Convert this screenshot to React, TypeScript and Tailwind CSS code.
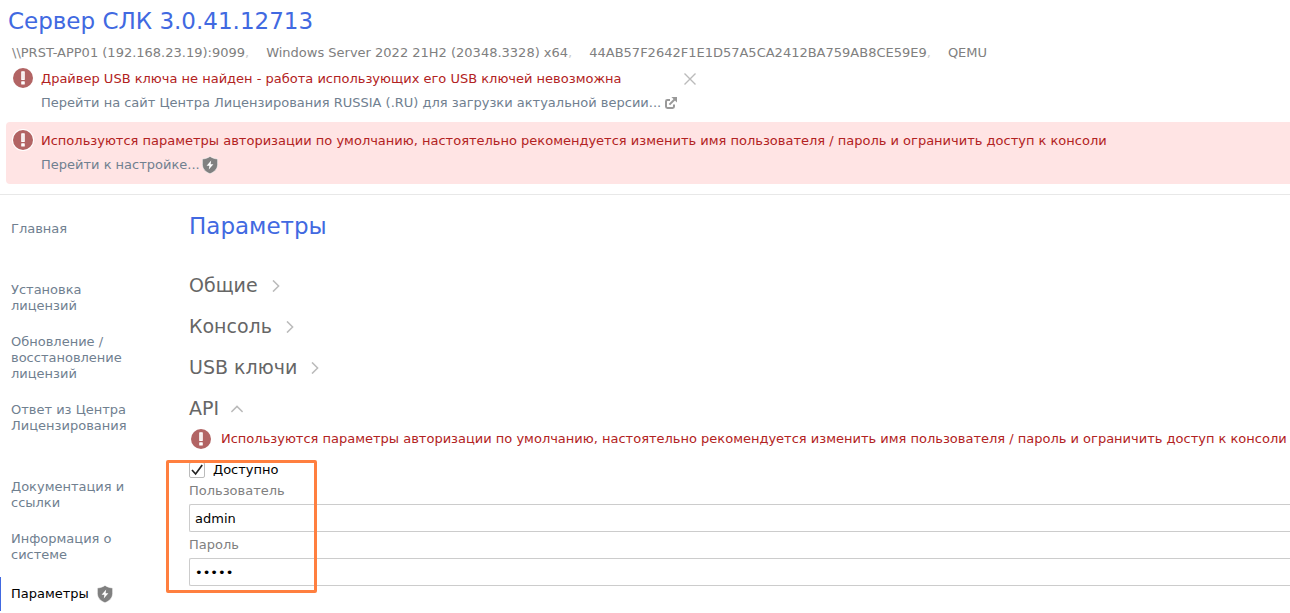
import { useState } from "react";
import clsx from "clsx";

const AUTH_WARNING =
  "Используются параметры авторизации по умолчанию, настоятельно рекомендуется изменить имя пользователя / пароль и ограничить доступ к консоли";

const serverInfo = [
  "\\\\PRST-APP01 (192.168.23.19):9099",
  "Windows Server 2022 21H2 (20348.3328) x64",
  "44AB57F2642F1E1D57A5CA2412BA759AB8CE59E9",
  "QEMU",
];

const menuGroups = [
  ["Главная"],
  ["Установка лицензий", "Обновление / восстановление лицензий", "Ответ из Центра Лицензирования"],
  ["Документация и ссылки", "Информация о системе", "Параметры"],
];

function AlertIcon() {
  return (
    <svg viewBox="0 0 22 22" className="h-[22px] w-[22px] shrink-0" aria-hidden="true">
      <circle cx="11" cy="11" r="11" fill="#fff" />
      <circle cx="11" cy="11" r="10" fill="#b26464" />
      <rect x="9.2" y="4.2" width="3.6" height="8.8" rx="0.6" fill="#fff" />
      <rect x="9.2" y="14.2" width="3.6" height="3.4" rx="0.6" fill="#fff" />
      <path d="M11 5.5V12" stroke="#e8d0d0" strokeWidth="0.8" />
    </svg>
  );
}

function ShieldIcon() {
  return (
    <svg viewBox="0 0 16 18" className="h-[18px] w-4 shrink-0" aria-hidden="true">
      <path
        d="M8 .4C10 1.8 12.6 2.8 15.6 3V8.4C15.6 12.8 12.4 16 8 17.7 3.6 16 .4 12.8 .4 8.4V3C3.4 2.8 6 1.8 8 .4Z"
        fill="#808080"
        stroke="#fff"
        strokeWidth="0.5"
      />
      <path d="M9.2 4.4 4.6 9.8H7.4L6.8 13.6 11.4 8.2H8.6Z" fill="#fff" />
    </svg>
  );
}

function ExternalIcon() {
  return (
    <svg viewBox="0 0 12 12" className="h-3 w-3 shrink-0" fill="none" stroke="#999" aria-hidden="true">
      <path d="M5 3H2.4Q1 3 1 4.4V9.6Q1 11 2.4 11H7.6Q9 11 9 9.6V7.4" strokeWidth="2" />
      <path d="M4.4 7.6 9.8 2.2" strokeWidth="2" />
      <path d="M6.4 0H12V5.6Z" fill="#999" stroke="none" />
    </svg>
  );
}

function CloseIcon() {
  return (
    <svg viewBox="0 0 12 12" className="h-3 w-3" fill="none" stroke="#bbb" strokeWidth="1.4" aria-hidden="true">
      <path d="M.5 .5 11.5 11.5M11.5 .5 .5 11.5" />
    </svg>
  );
}

function Chevron({ open }: { open: boolean }) {
  return (
    <svg
      viewBox="0 0 12 12"
      className={clsx("mt-[2px] h-3 w-3", open && "-rotate-90")}
      fill="none"
      stroke="#bbb"
      strokeWidth="1.5"
      aria-hidden="true"
    >
      <path d="M3 .4 8.6 6 3 11.6" />
    </svg>
  );
}

interface SectionProps {
  title: string;
  open: boolean;
  onToggle: () => void;
}

function SectionTitle({ title, open, onToggle }: SectionProps) {
  return (
    <h2>
      <button
        type="button"
        aria-expanded={open}
        onClick={onToggle}
        className="flex h-[41px] items-center gap-3 text-[19px] text-[#666]"
      >
        {title}
        <Chevron open={open} />
      </button>
    </h2>
  );
}

function ApiForm() {
  const [enabled, setEnabled] = useState(true);
  const [user, setUser] = useState("admin");
  const [password, setPassword] = useState("admin");

  return (
    <div>
      <div className="flex items-center gap-[9px] pl-px whitespace-nowrap text-[#b22222]">
        <AlertIcon />
        <p>{AUTH_WARNING}</p>
      </div>

      <div className="relative mt-3">
        <label className="flex h-4 items-center gap-2 text-black">
          <span className="grid">
            <input
              type="checkbox"
              checked={enabled}
              onChange={(e) => setEnabled(e.target.checked)}
              className="col-start-1 row-start-1 h-4 w-4 appearance-none rounded-xs border border-[#bbb] bg-white"
            />
            {enabled && (
              <svg
                viewBox="0 0 16 16"
                className="pointer-events-none col-start-1 row-start-1 h-4 w-4"
                fill="none"
                stroke="#222"
                strokeWidth="1.7"
                aria-hidden="true"
              >
                <path d="M3 8 6.6 12 13.2 3" />
              </svg>
            )}
          </span>
          Доступно
        </label>

        <label htmlFor="api-user" className="mt-1 block h-[22px] leading-[18px] text-[#808080]">
          Пользователь
        </label>
        <input
          id="api-user"
          type="text"
          value={user}
          onChange={(e) => setUser(e.target.value)}
          className="block h-7 w-full rounded-l-xs border border-r-0 border-[#ccc] px-[5px] text-black outline-none"
        />

        <label htmlFor="api-password" className="mt-1 block h-[22px] leading-[18px] text-[#808080]">
          Пароль
        </label>
        <input
          id="api-password"
          type="password"
          value={password}
          onChange={(e) => setPassword(e.target.value)}
          className="block h-7 w-full rounded-l-xs border border-r-0 border-[#ccc] px-[5px] text-black outline-none"
        />

        {/* Highlight frame over the credentials */}
        <div className="pointer-events-none absolute -top-[2px] -bottom-[7px] -left-[23px] w-[151px] rounded-xs border-3 border-[#ff7f3f]" />
      </div>
    </div>
  );
}

export default function App() {
  const [driverAlert, setDriverAlert] = useState(true);
  const [active, setActive] = useState("Параметры");
  const [openSection, setOpenSection] = useState("API");

  return (
    <div className="overflow-hidden bg-white font-['DejaVu_Sans',sans-serif] text-[13px] leading-4 text-[#708090]">
      <header className="border-b border-[#e8e8e8] pb-[10px]">
        <h1 className="px-2 pt-[5px] text-[23px] leading-8 text-[#4169e1]">Сервер СЛК 3.0.41.12713</h1>

        <ul className="mt-2 flex gap-[17px] px-3 whitespace-nowrap text-[#808080]">
          {serverInfo.map((item, i) => (
            <li key={item}>
              {item}
              {i < serverInfo.length - 1 && <span className="text-[#ccc]">,</span>}
            </li>
          ))}
        </ul>

        {driverAlert && (
          <div className="mt-[6px] flex gap-[7px] px-3">
            <AlertIcon />
            <div className="flex flex-col gap-2 pt-1">
              <p className="text-[#b22222]">
                Драйвер USB ключа не найден - работа использующих его USB ключей невозможна
              </p>
              <a href="#download" className="flex items-center gap-1">
                Перейти на сайт Центра Лицензирования RUSSIA (.RU) для загрузки актуальной версии...
                <ExternalIcon />
              </a>
            </div>
            <button type="button" aria-label="Закрыть" className="h-6" onClick={() => setDriverAlert(false)}>
              <CloseIcon />
            </button>
          </div>
        )}

        <div className="mt-[11px] ml-[6px] flex gap-[7px] rounded-l-sm bg-[#ffe4e4] py-[7px] pl-[6px]">
          <AlertIcon />
          <div className="flex flex-col gap-2 pt-1 pb-1 whitespace-nowrap">
            <p className="text-[#b22222]">{AUTH_WARNING}</p>
            <a href="#settings" className="flex h-4 items-center gap-[2px]">
              Перейти к настройке...
              <ShieldIcon />
            </a>
          </div>
        </div>
      </header>

      <div className="flex">
        <nav className="flex w-[189px] shrink-0 flex-col gap-[25px] pt-4">
          {menuGroups.map((group) => (
            <ul key={group[0]}>
              {group.map((item) => (
                <li key={item} className={clsx("pb-[2px]", active === item ? "pt-1" : "pt-[2px]")}>
                  <a
                    href="#menu"
                    onClick={() => setActive(item)}
                    className={clsx(
                      "flex items-center gap-2 border-l py-2 pl-[10px]",
                      active === item ? "border-[#4169e1] text-black" : "border-transparent"
                    )}
                  >
                    <span className="max-w-[125px]">{item}</span>
                    {item === "Параметры" && <ShieldIcon />}
                  </a>
                </li>
              ))}
            </ul>
          ))}
        </nav>

        <main className="min-w-0 flex-1">
          <h1 className="mt-[15px] mb-[22px] text-[23px] leading-8 text-[#4169e1]">Параметры</h1>
          {["Общие", "Консоль", "USB ключи", "API"].map((title) => (
            <SectionTitle
              key={title}
              title={title}
              open={openSection === title}
              onToggle={() => setOpenSection(openSection === title ? "" : title)}
            />
          ))}
          {openSection === "API" && <ApiForm />}
        </main>
      </div>
    </div>
  );
}
